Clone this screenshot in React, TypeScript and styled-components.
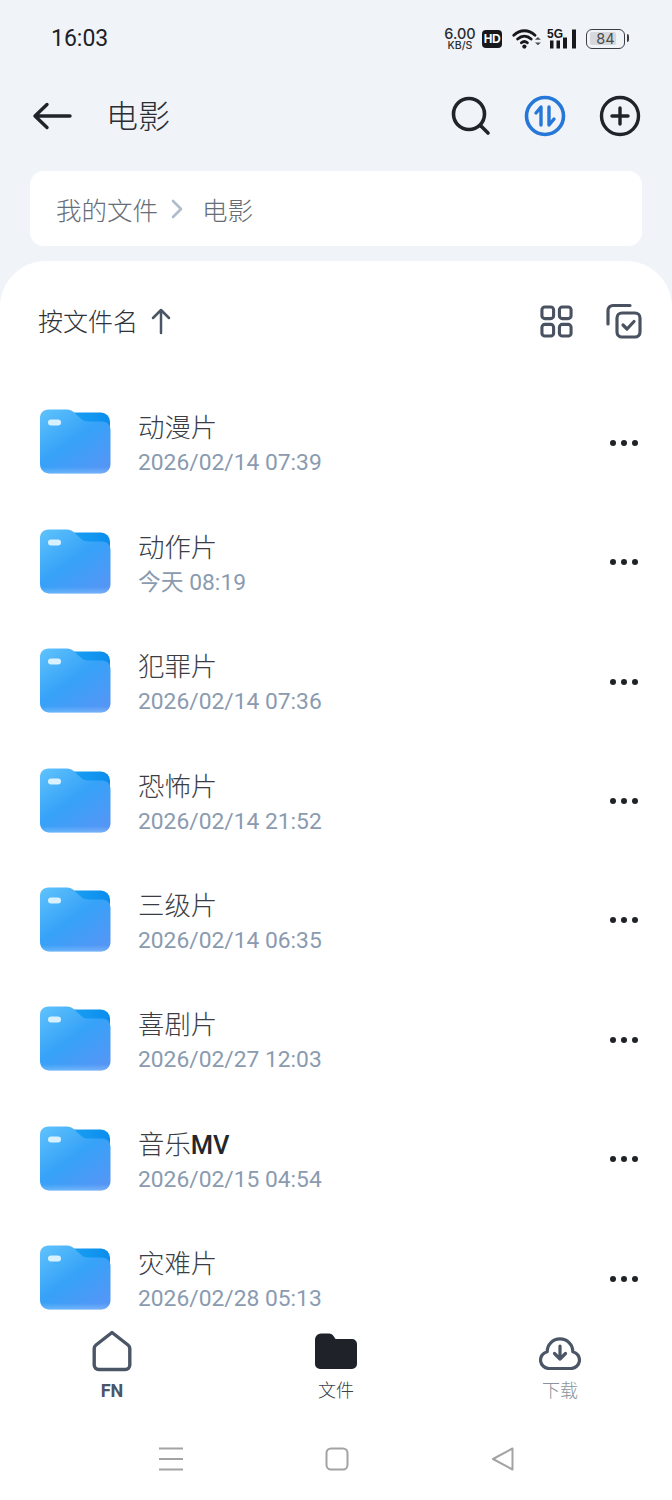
import * as React from "react";
import styled, { createGlobalStyle } from "styled-components";

const GlobalStyle = createGlobalStyle`
  html, body {
    margin: 0;
    padding: 0;
    background: #f0f4f9;
  }
  * {
    box-sizing: border-box;
  }
`;

const FONT = `Roboto, "Noto Sans CJK SC", sans-serif`;

const Page = styled.div`
  width: 672px;
  height: 1500px;
  display: flex;
  flex-direction: column;
  overflow: hidden;
  background: #f0f4f9;
  font-family: ${FONT};
  color: #23262b;
`;

const StatusBar = styled.div`
  height: 77px;
  flex: none;
  display: flex;
  align-items: center;
  justify-content: space-between;
  padding: 0 47px 0 51px;
`;

const Clock = styled.span`
  font-size: 23px;
  font-weight: 400;
  color: #1e2126;
`;

const StatusIcons = styled.div`
  display: flex;
  align-items: center;
  gap: 6px;
`;

const Speed = styled.div`
  width: 32px;
  display: flex;
  flex-direction: column;
  align-items: center;
  font-family: Inter, sans-serif;
  font-weight: 500;
  color: #2a2c30;
  font-size: 14.5px;
  line-height: 14px;
  span {
    font-size: 10.5px;
    line-height: 10px;
  }
`;

const HdBadge = styled.span`
  width: 20px;
  height: 18px;
  border-radius: 4px;
  background: #17181b;
  color: #fff;
  font: 800 12px/18px "Liberation Sans", sans-serif;
  text-align: center;
  letter-spacing: -0.5px;
  margin-right: 4px;
`;

const Battery = styled.div`
  width: 39px;
  height: 20px;
  padding: 2.5px;
  position: relative;
  border: 1.5px solid #3b3d41;
  border-radius: 6px;
  margin-left: 3px;
  &::after {
    content: "";
    position: absolute;
    right: -5px;
    top: 4px;
    width: 2.5px;
    height: 8px;
    background: #3b3d41;
    border-radius: 0 2px 2px 0;
  }
`;

const BatteryLevel = styled.div`
  height: 100%;
  background: #d6d8db;
  border-radius: 2px;
`;

const BatteryText = styled.span`
  position: absolute;
  inset: 0;
  font: 400 14.5px/17px Inter, sans-serif;
  color: #4a4c50;
  text-align: center;
`;

const Header = styled.header`
  height: 78px;
  flex: none;
  display: flex;
  align-items: center;
  padding: 0 31px 0 32px;
`;

const HeaderTitle = styled.h1`
  margin: -4px 0 0 34px;
  flex: 1;
  font-size: 32px;
  font-weight: 300;
  color: #2a2d33;
`;

const HeaderActions = styled.div`
  display: flex;
  align-items: center;
  gap: 33px;
`;

const Breadcrumb = styled.nav`
  margin: 16px 30px 0;
  height: 75px;
  flex: none;
  display: flex;
  align-items: center;
  padding: 0 26px;
  border-radius: 14px;
  background: #fff;
  font-size: 25.5px;
  font-weight: 300;
  color: #666d77;
`;

const CrumbSeparator = styled.span`
  display: flex;
  margin: 0 18px 0 12px;
`;

const Sheet = styled.main`
  margin-top: 15px;
  flex: 1;
  min-height: 0;
  display: flex;
  flex-direction: column;
  background: #fff;
  border-radius: 46px 46px 0 0;
  overflow: hidden;
`;

const SortBar = styled.div`
  height: 120px;
  flex: none;
  display: flex;
  align-items: center;
  padding: 0 30px 0 38px;
`;

const SortLabel = styled.span`
  font-size: 25px;
  font-weight: 300;
  color: #2f3339;
  margin: -2px 13px 0 0;
`;

const SortTools = styled.div`
  margin-left: auto;
  display: flex;
  align-items: center;
  gap: 33px;
`;

const FileList = styled.ul`
  margin: 0;
  padding: 1px 0 0;
  list-style: none;
  flex: 1;
  min-height: 0;
  overflow: hidden;
`;

const FileRow = styled.li`
  height: 119.45px;
  display: flex;
  align-items: center;
  padding: 0 34px 0 40px;
`;

const FileText = styled.div`
  margin-left: 27px;
  padding-top: 8px;
  flex: 1;
  display: flex;
  flex-direction: column;
  gap: 3px;
`;

const FileName = styled.div`
  font-size: 26.4px;
  line-height: 32px;
  font-weight: 300;
  color: #3a3e44;
  b {
    font-weight: 500;
    color: #23262b;
    font-size: 25.5px;
  }
`;

const FileDate = styled.div`
  font-size: 22.8px;
  line-height: 32px;
  color: #8a9bb0;
`;

const MoreDots = styled.div`
  display: flex;
  gap: 5px;
  margin-top: 2px;
  i {
    width: 6px;
    height: 6px;
    border-radius: 50%;
    background: #1f2226;
  }
`;

const TabBar = styled.footer`
  height: 108px;
  flex: none;
  display: grid;
  grid-template-columns: repeat(3, 224px);
  padding-top: 17px;
  background: #fff;
`;

const Tab = styled.div`
  display: flex;
  flex-direction: column;
  align-items: center;
`;

const TabIcon = styled.div`
  height: 44px;
  display: flex;
  align-items: center;
`;

const TabLabel = styled.span<{ $tone: string; $bold?: boolean }>`
  margin-top: 6px;
  font-size: 18px;
  line-height: 24px;
  font-weight: ${(p) => (p.$bold ? 700 : 300)};
  color: ${(p) => p.$tone};
`;

const SystemNav = styled.div`
  height: 80px;
  flex: none;
  display: grid;
  grid-template-columns: repeat(3, 166px);
  justify-content: center;
  justify-items: center;
  align-items: start;
  padding: 27px 0 0 2px;
  background: #fff;
`;

const FolderIcon = ({ id }: { id: string }) => (
  <svg width="71" height="65" viewBox="0 0 71 65" style={{ flex: "none" }}>
    <defs>
      <linearGradient id={`back-${id}`} x1="0" y1="0" x2="1" y2="0">
        <stop offset="0" stopColor="#1aa0f2" />
        <stop offset="1" stopColor="#0b8ded" />
      </linearGradient>
      <linearGradient id={`front-${id}`} x1="0.1" y1="0" x2="0.85" y2="0.95">
        <stop offset="0" stopColor="#5cc0fb" />
        <stop offset="0.5" stopColor="#36a2f8" />
        <stop offset="1" stopColor="#5496f6" />
      </linearGradient>
      <linearGradient id={`glow-${id}`} x1="0" y1="0" x2="0" y2="1">
        <stop offset="0.9" stopColor="#a8dcff" stopOpacity="0" />
        <stop offset="1" stopColor="#a8dcff" stopOpacity="0.4" />
      </linearGradient>
    </defs>
    <path d="M30 3.5H61a9 9 0 0 1 9 9V28H30z" fill={`url(#back-${id})`} />
    <path
      d="M8.5 0.5H27c3 0 4.8 1 6.8 2.8l6.6 6c2.4 2.2 4.2 3.2 7.6 3.2H62c5 0 8.5 3.5 8.5 8.5V55c0 5.5-4 9.5-9.5 9.5H9.5C4 64.5 0 60.5 0 55V9C0 4 3.5 0.5 8.5 0.5z"
      fill={`url(#front-${id})`}
    />
    <path
      d="M8.5 0.5H27c3 0 4.8 1 6.8 2.8l6.6 6c2.4 2.2 4.2 3.2 7.6 3.2H62c5 0 8.5 3.5 8.5 8.5V55c0 5.5-4 9.5-9.5 9.5H9.5C4 64.5 0 60.5 0 55V9C0 4 3.5 0.5 8.5 0.5z"
      fill={`url(#glow-${id})`}
    />
    <rect x="8" y="10.5" width="13" height="6" rx="3" fill="#d8f1ff" />
  </svg>
);

const files = [
  { name: "动漫片", date: "2026/02/14 07:39" },
  { name: "动作片", date: "今天 08:19" },
  { name: "犯罪片", date: "2026/02/14 07:36" },
  { name: "恐怖片", date: "2026/02/14 21:52" },
  { name: "三级片", date: "2026/02/14 06:35" },
  { name: "喜剧片", date: "2026/02/27 12:03" },
  { name: "音乐", suffix: "MV", date: "2026/02/15 04:54" },
  { name: "灾难片", date: "2026/02/28 05:13" },
];

const App = (): React.ReactElement => {
  return (
    <Page>
      <GlobalStyle />
      <StatusBar>
        <Clock>16:03</Clock>
        <StatusIcons>
          <Speed>
            6.00
            <span>KB/S</span>
          </Speed>
          <HdBadge>HD</HdBadge>
          <svg width="29" height="22" viewBox="0 0 34 26">
            <g fill="none" stroke="#17181b" strokeWidth="3.4" strokeLinecap="round">
              <path d="M2 8.5C9.5 1.5 19.5 1.5 27 8.5" />
              <path d="M6.5 13C11.5 8.5 17.5 8.5 22.5 13" />
              <path d="M11 17.5c2.2-2 4.8-2 7 0" />
            </g>
            <circle cx="14.5" cy="22" r="2.5" fill="#17181b" />
            <path d="M27 14h7l-3.5-3.5zM27 17h7l-3.5 3.500z" fill="#4a4c50" />
          </svg>
          <svg width="30" height="22" viewBox="0 0 30 22">
            <rect x="3" y="12.5" width="3.5" height="8" fill="#17181b" />
            <rect x="9.5" y="12.5" width="3.5" height="8" fill="#17181b" />
            <rect x="16" y="9.5" width="4" height="11" fill="#17181b" />
            <rect x="25" y="1.5" width="4" height="19" fill="#17181b" />
            <text x="0" y="10" fontFamily="'Liberation Sans', sans-serif" fontWeight="700" fontSize="12" fill="#17181b">
              5G
            </text>
          </svg>
          <Battery>
            <BatteryLevel style={{ width: "84%" }} />
            <BatteryText>84</BatteryText>
          </Battery>
        </StatusIcons>
      </StatusBar>

      <Header>
        <svg width="40" height="32" viewBox="0 0 40 32">
          <path
            d="M38 16H3M15 4.5L3 16l12 11.5"
            fill="none"
            stroke="#20242a"
            strokeWidth="3.4"
            strokeLinecap="round"
            strokeLinejoin="round"
          />
        </svg>
        <HeaderTitle>电影</HeaderTitle>
        <HeaderActions>
          <svg width="42" height="42" viewBox="0 0 42 42">
            <circle cx="20" cy="19" r="15.5" fill="none" stroke="#20242a" strokeWidth="3.6" />
            <path d="M32 31l7 7" stroke="#20242a" strokeWidth="3.6" strokeLinecap="round" />
          </svg>
          <svg width="42" height="42" viewBox="0 0 42 42">
            <circle cx="21" cy="21" r="18.5" fill="none" stroke="#2577d8" strokeWidth="3.6" />
            <path
              d="M17 30V12l-5 6M25 12v18l5-6"
              fill="none"
              stroke="#2577d8"
              strokeWidth="3.4"
              strokeLinecap="round"
              strokeLinejoin="round"
            />
          </svg>
          <svg width="42" height="42" viewBox="0 0 42 42">
            <circle cx="21" cy="21" r="18.5" fill="none" stroke="#20242a" strokeWidth="3.4" />
            <path d="M21 13v16M13 21h16" stroke="#20242a" strokeWidth="3.4" strokeLinecap="round" />
          </svg>
        </HeaderActions>
      </Header>

      <Breadcrumb>
        我的文件
        <CrumbSeparator>
          <svg width="14" height="20" viewBox="0 0 14 20">
            <path d="M3 2l8 8-8 8" fill="none" stroke="#aebccb" strokeWidth="2.6" strokeLinecap="round" strokeLinejoin="round" />
          </svg>
        </CrumbSeparator>
        电影
      </Breadcrumb>

      <Sheet>
        <SortBar>
          <SortLabel>按文件名</SortLabel>
          <svg width="20" height="28" viewBox="0 0 20 28">
            <path d="M10 26V3M2 11l8-8 8 8" fill="none" stroke="#4a5566" strokeWidth="2.5" strokeLinecap="round" strokeLinejoin="round" />
          </svg>
          <SortTools>
            <svg width="33" height="33" viewBox="0 0 34 34">
              <g fill="none" stroke="#4a5262" strokeWidth="3.2">
                <rect x="2" y="2" width="12" height="12" rx="3" />
                <rect x="20" y="2" width="12" height="12" rx="3" />
                <rect x="2" y="20" width="12" height="12" rx="3" />
                <rect x="20" y="20" width="12" height="12" rx="3" />
              </g>
            </svg>
            <svg width="36" height="36" viewBox="0 0 36 36">
              <g fill="none" stroke="#4a5262" strokeWidth="3.2" strokeLinecap="round" strokeLinejoin="round">
                <path d="M24 2.5H7a5 5 0 0 0-5 5V21" />
                <rect x="11" y="10" width="23" height="24" rx="5" />
                <path d="M17 22l4 4 7-7.5" />
              </g>
            </svg>
          </SortTools>
        </SortBar>

        <FileList>
          {files.map((file) => (
            <FileRow key={file.name}>
              <FolderIcon id={file.name} />
              <FileText>
                <FileName>
                  {file.name}
                  {file.suffix ? <b>{file.suffix}</b> : null}
                </FileName>
                <FileDate>{file.date}</FileDate>
              </FileText>
              <MoreDots>
                <i />
                <i />
                <i />
              </MoreDots>
            </FileRow>
          ))}
        </FileList>

        <TabBar>
          <Tab>
            <TabIcon>
              <svg width="40" height="42" viewBox="0 0 40 42">
                <path
                  d="M20 2.5L36 15c1 .8 1.8 2 1.8 3.5V35a4.5 4.5 0 0 1-4.5 4.5H6.7A4.5 4.5 0 0 1 2.2 35V18.5c0-1.5.8-2.7 1.8-3.5z"
                  fill="none"
                  stroke="#4a5566"
                  strokeWidth="3.4"
                  strokeLinejoin="round"
                />
              </svg>
            </TabIcon>
            <TabLabel $tone="#4a5566" $bold>
              FN
            </TabLabel>
          </Tab>
          <Tab>
            <TabIcon>
              <svg width="42" height="36" viewBox="0 0 42 36">
                <path
                  d="M6 0.5H14c2 0 3.5 1 4.5 2.5L20.5 6H37a5 5 0 0 1 5 5v20a5 5 0 0 1-5 5H5a5 5 0 0 1-5-5V6.5a6 6 0 0 1 6-6z"
                  fill="#1f2329"
                />
              </svg>
            </TabIcon>
            <TabLabel $tone="#3c4148">文件</TabLabel>
          </Tab>
          <Tab>
            <TabIcon>
              <svg width="42" height="38" viewBox="0 0 42 38">
                <path
                  d="M10 36.5A8.5 8.5 0 0 1 8.2 19.7 12.8 12.8 0 0 1 33.8 19.7 8.5 8.5 0 0 1 32 36.5z"
                  fill="none"
                  stroke="#4a5566"
                  strokeWidth="3.2"
                  strokeLinejoin="round"
                />
                <path
                  d="M21 14v13M15.5 21.5L21 27l5.5-5.5"
                  fill="none"
                  stroke="#4a5566"
                  strokeWidth="3.2"
                  strokeLinecap="round"
                  strokeLinejoin="round"
                />
              </svg>
            </TabIcon>
            <TabLabel $tone="#8c929b">下载</TabLabel>
          </Tab>
        </TabBar>

        <SystemNav>
          <svg width="24" height="24" viewBox="0 0 24 24">
            <path d="M0 1.5h24M0 12h24M0 22.5h24" stroke="#a3a3a3" strokeWidth="2" />
          </svg>
          <svg width="24" height="24" viewBox="0 0 24 24">
            <rect x="1.5" y="1.5" width="21" height="21" rx="4.5" fill="none" stroke="#a3a3a3" strokeWidth="2" />
          </svg>
          <svg width="24" height="24" viewBox="0 0 24 24">
            <path d="M21.5 1.5v21L2 12z" fill="none" stroke="#a3a3a3" strokeWidth="2" strokeLinejoin="round" />
          </svg>
        </SystemNav>
      </Sheet>
    </Page>
  );
};

export default App;
